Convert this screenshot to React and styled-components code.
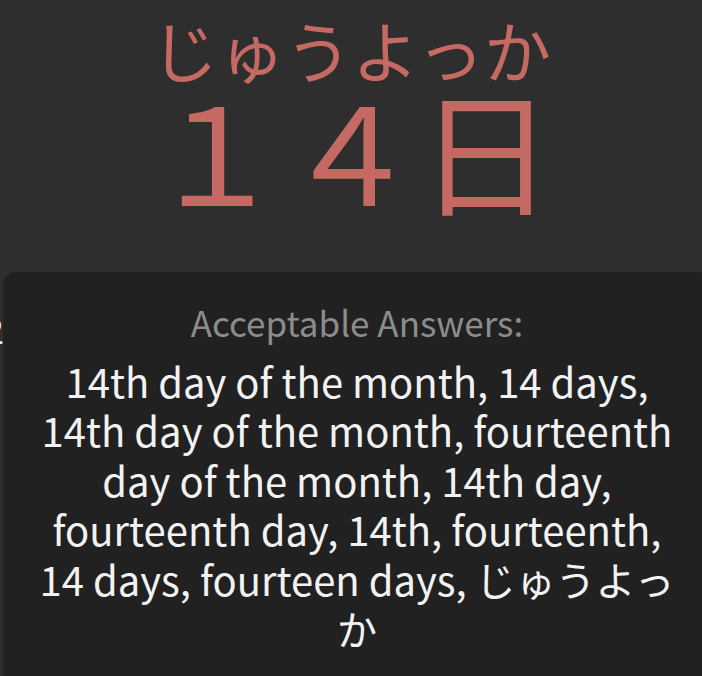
import styled, { createGlobalStyle } from "styled-components";

const GlobalStyle = createGlobalStyle`
    html, body {
        margin: 0;
        padding: 0;
        background: #2e2e2e;
        overflow: hidden;
    }
    body {
        font-family: "Noto Sans CJK JP", "Noto Sans", sans-serif;
    }
`;

const answers =
    "14th day of the month, 14 days, 14th day of the month, fourteenth day of the month, 14th day, fourteenth day, 14th, fourteenth, 14 days, fourteen days, じゅうよっか";

const App = () => {
    return (
        <Page>
            <GlobalStyle />
            <Header>
                <Reading>じゅうよっか</Reading>
                <Kanji>１４日</Kanji>
            </Header>
            <Stage>
                <Peek>2</Peek>
                <Card>
                    <Label>Acceptable Answers:</Label>
                    <Answers>{answers}</Answers>
                </Card>
            </Stage>
        </Page>
    );
};

const Page = styled.div`
    width: 702px;
    height: 676px;
    display: flex;
    flex-direction: column;
    color: #f2f2f2;
`;

const Header = styled.header`
    display: flex;
    flex-direction: column;
    align-items: center;
    padding-top: 18px;
`;

const Reading = styled.div`
    font-size: 67px;
    line-height: 62px;
    color: #c46a62;
`;

const Kanji = styled.div`
    font-size: 135px;
    line-height: 135px;
    color: #c46a62;
`;

const Stage = styled.div`
    position: relative;
    margin-top: 57px;
    padding-left: 3px;
`;

const Peek = styled.span`
    position: absolute;
    left: -16px;
    top: 38px;
    font-size: 36px;
    line-height: 36px;
    color: #f2f2f2;
    z-index: 0;
`;

const Card = styled.section`
    position: relative;
    z-index: 1;
    width: 708px;
    box-sizing: border-box;
    background: #212121;
    border-radius: 12px;
    padding: 29px 30px 40px;
    display: flex;
    flex-direction: column;
    align-items: center;
    text-align: center;
`;

const Label = styled.div`
    font-size: 35px;
    line-height: 42px;
    color: #8c8c8c;
`;

const Answers = styled.p`
    margin: 14px 0 0;
    font-size: 40px;
    line-height: 49.4px;
    color: #f2f2f2;
`;

export default App;
